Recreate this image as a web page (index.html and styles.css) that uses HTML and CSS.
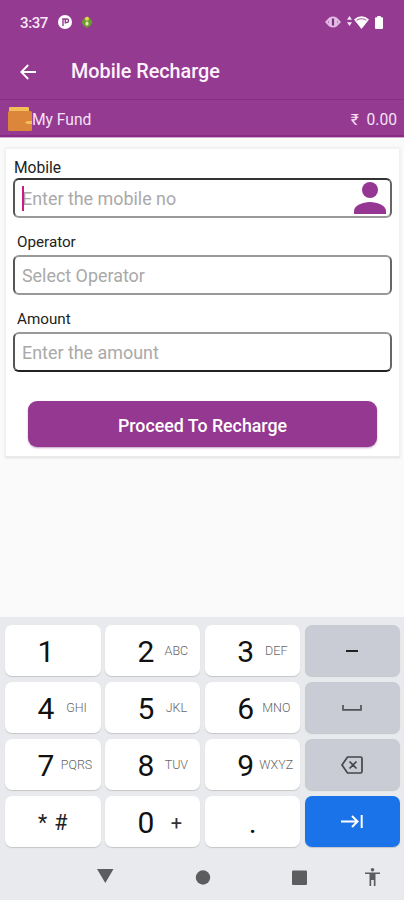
FILE: index.html
```html
<!DOCTYPE html>
<html lang="en">
<head>
<meta charset="utf-8">
<title>Mobile Recharge</title>
<link rel="stylesheet" href="styles.css">
</head>
<body>
<div class="screen">
  <header class="top">
    <div class="status">
      <span class="time">3:37</span>
      <svg class="s-app" width="14" height="14" viewBox="0 0 14 14"><circle cx="7" cy="7" r="7" fill="#fff"/><path d="M5 11V4.500M7.300 8.500V4.500M4.200 4h4.600a1.500 1.500 0 0 1 0 3.500H8" fill="none" stroke="#943a91" stroke-width="1.400"/></svg>
      <svg class="s-bug" width="12" height="13" viewBox="0 0 12 13"><path d="M6 .5l3 2L11.500 6 9.500 9.500 6 12 2.500 9.500.5 6 3 2.500z" fill="#6f9a32"/><circle cx="6" cy="2.800" r="2" fill="#e2d84c"/><rect x="4.500" y="5.500" width="3" height="4" rx="1.500" fill="#dcebaa"/></svg>
      <span class="grow"></span>
      <svg class="s-eye" width="16" height="12" viewBox="0 0 16 12"><path d="M0 6l4-4.300Q8-.8 12 1.700L16 6l-4 4.300q-4 2.500-8 0z" fill="#e3bce3"/><path d="M8 2.500v7" stroke="#7d2f80" stroke-width="2.200"/><path d="M2.500 6l1.500-1.500v3zM13.500 6L12 4.500v3z" fill="#b679b5"/></svg>
      <svg class="s-data" width="5" height="10" viewBox="0 0 5 10"><path d="M2.500 0L5 3.800H0zM0 6.200h5L2.500 10z" fill="#f6e6f6"/></svg>
      <svg class="s-wifi" width="15" height="13" viewBox="0 0 15 13"><path d="M0 3.500Q7.500-3 15 3.500L7.500 13z" fill="#fff"/><path d="M2.500 4.300q5-3.300 10 0" stroke="#b77ab5" stroke-width="1.100" fill="none"/></svg>
      <svg class="s-bat" width="8" height="13" viewBox="0 0 8 13"><path d="M2.300 0h3.400v1.200H7a1 1 0 0 1 1 1V12a1 1 0 0 1-1 1H1a1 1 0 0 1-1-1V2.200a1 1 0 0 1 1-1h1.300z" fill="#fff"/></svg>
    </div>
    <div class="appbar">
      <svg width="16" height="16" viewBox="0 0 16 16" fill="none" stroke="#fff" stroke-width="1.800"><path d="M16 8H1.500M8.200 1L1.300 8l6.900 7"/></svg>
      <h1>Mobile Recharge</h1>
    </div>
    <div class="fund">
      <svg width="24" height="24" viewBox="0 0 24 24"><rect x="1" y="0" width="20" height="6" rx="1" fill="#f3bd57"/><rect y="4" width="24" height="20" rx="1.500" fill="#dc863c"/><path d="M17 15.500l2-1.500h5v3h-5z" fill="#f3bd57"/></svg>
      <span>My Fund</span>
      <span class="balance">₹&nbsp; 0.00</span>
    </div>
  </header>
  <main>
    <section class="card">
      <div class="label first">Mobile</div>
      <div class="field dark-top"><i class="caret"></i><span>Enter the mobile no</span>
        <svg width="32" height="32" viewBox="0 0 32 32" fill="#943692"><circle cx="16" cy="8" r="8"/><path d="M0 32v-3c0-5.500 8.500-9 16-9s16 3.500 16 9v3z"/></svg>
      </div>
      <div class="label">Operator</div>
      <div class="field"><span>Select Operator</span></div>
      <div class="label">Amount</div>
      <div class="field dark-bottom"><span>Enter the amount</span></div>
      <div class="proceed">Proceed To Recharge</div>
    </section>
  </main>
  <footer class="keyboard">
    <div class="keys">
      <div class="key"><b>1</b></div>
      <div class="key"><b>2</b><small>ABC</small></div>
      <div class="key"><b>3</b><small>DEF</small></div>
      <div class="key fn"><svg width="12" height="2" viewBox="0 0 12 2"><path d="M0 1h12" stroke="#222" stroke-width="2"/></svg></div>
      <div class="key"><b>4</b><small>GHI</small></div>
      <div class="key"><b>5</b><small>JKL</small></div>
      <div class="key"><b>6</b><small>MNO</small></div>
      <div class="key fn"><svg width="20" height="6" viewBox="0 0 20 6"><path d="M1 0v4.800h18V0" fill="none" stroke="#50525a" stroke-width="1.700"/></svg></div>
      <div class="key"><b>7</b><small>PQRS</small></div>
      <div class="key"><b>8</b><small>TUV</small></div>
      <div class="key"><b>9</b><small>WXYZ</small></div>
      <div class="key fn"><svg width="22" height="18" viewBox="0 0 22 18" fill="none" stroke="#44464c" stroke-width="1.700"><path d="M6.500 1H19.500a1.500 1.500 0 0 1 1.500 1.500v13a1.500 1.500 0 0 1-1.500 1.500H6.500L1 9zM8.500 5.500l7 7M15.500 5.500l-7 7"/></svg></div>
      <div class="key symbols"><span class="star">*</span><span>#</span></div>
      <div class="key"><b>0</b><small class="plus">+</small></div>
      <div class="key dot"><b>.</b></div>
      <div class="key next"><svg width="22" height="13" viewBox="0 0 22 13" fill="none" stroke="#fff" stroke-width="2"><path d="M0 6.500h16M11 1l5.500 5.500L11 12M20.700 0v13"/></svg></div>
    </div>
    <nav class="nav">
      <svg width="404" height="20" viewBox="0 0 404 20" fill="#5b5d5f"><path d="M97 2h16.500l-8.200 14z"/><circle cx="203" cy="10.500" r="7.200"/><rect x="292" y="3.500" width="15" height="14.500" rx="1"/><circle cx="372.500" cy="2.800" r="1.800"/><path d="M365 5.400h15v1.600h-4.500V19h-1.700v-6h-2.600v6h-1.700V7H365z"/></svg>
    </nav>
  </footer>
</div>
</body>
</html>
```
FILE: styles.css
```css
* { box-sizing: border-box; }
body { margin: 0; font-family: Roboto, "Noto Sans", sans-serif; background: #fafafa; }
svg { display: block; flex: none; }
.screen { width: 404px; height: 900px; display: flex; flex-direction: column; overflow: hidden; }
.top { height: 138px; background: #943a91; color: #fff; border-bottom: 1px solid #d3a8d1; }
.status { height: 44px; padding: 0 21px 0 20px; display: flex; align-items: center; }
.time { font-size: 15px; font-weight: 500; width: 38px; color: #f8e9f8; letter-spacing: -.4px; padding-top: 1px; }
.s-bug { margin-left: 9px; }
.grow { flex: 1; }
.s-data { margin-left: 6px; margin-top: -2px; }
.s-wifi { margin-left: 2px; }
.s-bat { margin-left: 6px; }
.appbar { height: 55px; display: flex; align-items: center; padding-left: 20px; }
h1 { margin: 0 0 0 35px; font-size: 19.8px; font-weight: 500; line-height: 24px; color: #fdf3fd; }
.fund { height: 38px; border-top: 1px solid #86317f; border-bottom: 2px solid #892a87; display: flex; align-items: center; padding: 3px 7px 0 8px; font-size: 15.6px; color: #f6e2f6; }
.fund span { padding-top: 2px; }
.balance { margin-left: auto; }
main { flex: 1; padding: 10px 4px 0 5px; }
.card { height: 310px; background: #fff; border: 1px solid #f1f1f1; border-bottom: 2px solid #e9e9e9; box-shadow: 0 0 3px #e5e5e5; padding: 0 7px; display: flex; flex-direction: column; }
.label { height: 37px; padding: 15px 0 0 4px; font-size: 15.2px; line-height: 18px; color: #222; }
.label.first { height: 29px; padding: 10px 0 0 1px; font-size: 15.6px; }
.field { position: relative; height: 40px; border: 2px solid #999; border-left-color: #555; border-right-color: #666; border-radius: 6px; display: flex; align-items: center; justify-content: space-between; padding: 0 4px 0 7px; font-size: 17.9px; color: #a9a9a9; }
.dark-top { border-top-color: #333; }
.dark-bottom { border-bottom-color: #222; }
.caret { position: absolute; left: 7px; top: 6px; width: 2px; height: 25px; background: #d01884; }
.field svg { margin-top: -1px; }
.proceed { height: 46px; margin: 29px 15px 0; border-radius: 9px; background: #943891; color: #fff; font-size: 17.8px; font-weight: 500; display: flex; align-items: center; justify-content: center; padding-top: 2px; box-shadow: 0 1px 2px #c6a0c5; }
.keyboard { height: 283px; background: #e9eaed; }
.keys { padding: 8px 4px 0 5px; display: grid; grid-template-columns: repeat(4, 95.5px); grid-auto-rows: 51px; gap: 6px 4.4px; }
.key { background: #fff; border-radius: 7px; box-shadow: 0 1px 1px #c5c6c9; display: grid; grid-template-columns: 30px 34px; align-items: center; justify-items: center; padding-left: 26px; }
.key b { font-size: 30px; font-weight: 400; line-height: 36px; color: #111; padding-top: 2px; }
.key small { font-size: 12.5px; font-weight: 300; color: #666; justify-self: center; margin-left: -3px; }
.fn, .next { display: flex; justify-content: center; padding: 0; }
.fn { background: #caccd5; }
.next { background: #1a73e8; }
.key .plus { font-size: 20px; font-weight: 400; color: #333; padding-top: 3px; }
.symbols { display: flex; gap: 7px; padding-left: 33px; font-size: 21.5px; color: #222; }
.symbols span { padding-top: 2px; }
.dot b { margin-left: 14px; }
.nav { padding-top: 20px; }
```
